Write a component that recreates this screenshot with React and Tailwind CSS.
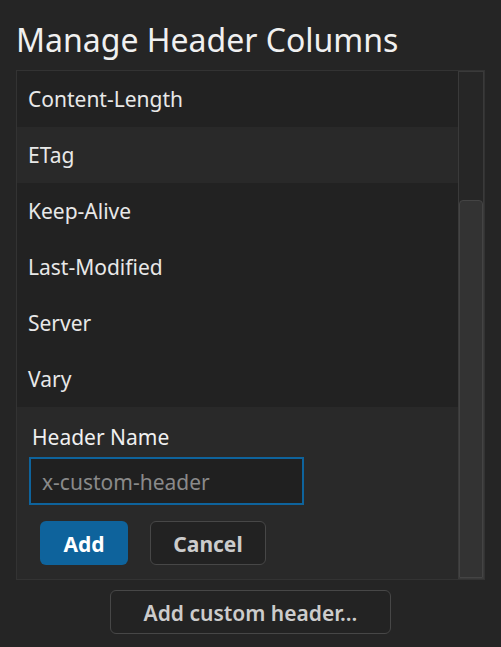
const rows = ["Content-Length", "ETag", "Keep-Alive", "Last-Modified", "Server", "Vary"];

export default function App() {
  return (
    <div
      className="min-h-screen w-full bg-[#252525] text-[#e8e8e8] px-4 pt-[20px]"
      style={{ fontFamily: '"Noto Sans", "Open Sans", sans-serif' }}
    >
      <h1 className="text-[32px] leading-[40px] text-[#f0f0f0] mb-[10px]">Manage Header Columns</h1>

      <div className="flex h-[510px] w-[469px] border border-[#333333] bg-[#222222]">
        <div className="flex-1 flex flex-col">
          {rows.map((r) => (
            <div
              key={r}
              className={`h-[56px] shrink-0 flex items-center px-[11px] pt-[2px] text-[21px] ${r === "ETag" ? "bg-[#292929]" : ""}`}
            >
              {r}
            </div>
          ))}
          <div className="flex-1 bg-[#292929] px-[12px] pt-[16px]">
            <div className="text-[21px] leading-[28px] text-[#f0f0f0] pl-[3px]">Header Name</div>
            <input
              placeholder="x-custom-header"
              className="mt-[6px] block w-[275px] h-[48px] bg-[#202020] border-2 border-[#0e639c] px-[11px] pt-[2px] text-[21px] text-[#e8e8e8] placeholder:text-[#8a8a8a] outline-none"
            />
            <div className="flex gap-[22px] mt-[16px] pl-[11px]">
              <button className="w-[88px] h-[44px] rounded-[6px] bg-[#0e639c] text-white text-[21px] font-bold pt-[3px]">Add</button>
              <button className="w-[116px] h-[44px] rounded-[6px] border border-[#474747] bg-[#222222] text-[#cccccc] text-[21px] font-bold pt-[3px]">Cancel</button>
            </div>
          </div>
        </div>
        <div className="w-[26px] border border-[#3a3a3a] bg-[#262626] flex flex-col justify-end">
          <div className="h-[378px] bg-[#333333] rounded-t-[4px] border border-[#444444]"></div>
        </div>
      </div>

      <div className="flex justify-center mt-[10px] w-[469px]">
        <button className="w-[281px] h-[44px] rounded-[6px] border border-[#474747] bg-[#232323] text-[#cccccc] text-[21px] font-semibold pt-[3px]">
          Add custom header...
        </button>
      </div>
    </div>
  );
}
